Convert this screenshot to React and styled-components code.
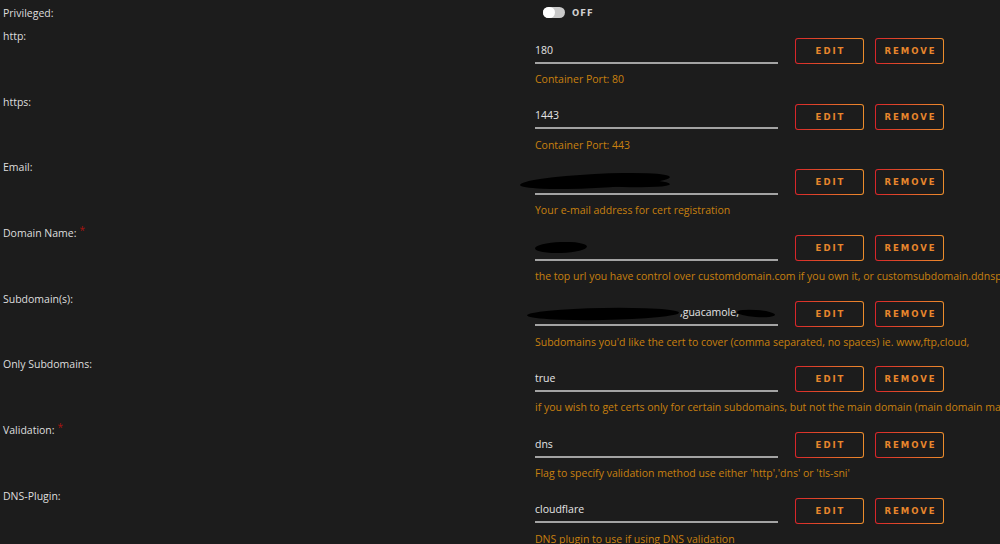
import React from "react";
import styled, { createGlobalStyle } from "styled-components";

const GlobalStyle = createGlobalStyle`
  html, body {
    margin: 0;
    padding: 0;
    background: #1c1c1c;
    overflow: hidden;
  }
  body {
    font-family: "Open Sans", "Noto Sans", sans-serif;
    -webkit-font-smoothing: antialiased;
  }
`;

const Page = styled.div`
  width: 1000px;
  height: 544px;
  overflow: hidden;
`;

const Row = styled.div`
  display: grid;
  grid-template-columns: 532px 1fr;
  padding-left: 3px;
  height: ${(p) => (p.$compact ? "32px" : "65.7px")};
  padding-top: ${(p) => (p.$compact ? "6px" : "0")};
  box-sizing: border-box;
  align-items: start;
`;

const Label = styled.div`
  font-size: 10.5px;
  font-weight: 500;
  line-height: 14px;
  color: #dedede;
  white-space: nowrap;
  margin-top: ${(p) => (p.$compact ? "0" : "-3px")};
`;

const Required = styled.span`
  color: #a8140f;
  font-size: 10px;
  position: relative;
  top: -3px;
  margin-left: 3px;
`;

const Field = styled.div`
  display: flex;
  flex-direction: column;
  padding-top: 6px;
`;

const Controls = styled.div`
  display: flex;
  align-items: center;
  height: 26px;
`;

const Value = styled.div`
  position: relative;
  width: 243px;
  height: 25px;
  box-sizing: border-box;
  border-bottom: 2px solid #a3a3a3;
  font-size: 10.5px;
  font-weight: 500;
  line-height: 23px;
  color: #e4e4e4;
  white-space: nowrap;
  margin-right: 17px;
`;

const Redact = styled.span`
  position: absolute;
  background: #000;
  border-radius: 50%;
  transform: rotate(${(p) => p.$rot || 0}deg);
`;

const Button = styled.button`
  width: 69px;
  height: 26px;
  margin-right: 11px;
  box-sizing: border-box;
  border: 1.5px solid transparent;
  border-radius: 3px;
  background: linear-gradient(#1c1c1c, #1c1c1c) padding-box,
    linear-gradient(90deg, #d8262a, #ec8d2c) border-box;
  color: #e8862c;
  font-family: "DejaVu Sans", "Open Sans", sans-serif;
  font-size: 8.5px;
  font-weight: 700;
  letter-spacing: 2px;
  padding: 0 0 0 2px;
  cursor: pointer;
`;

const Help = styled.div`
  margin-top: 8px;
  font-size: 10.5px;
  line-height: 14px;
  color: #c8800f;
  white-space: nowrap;
`;

const ToggleWrap = styled.div`
  display: flex;
  align-items: center;
  margin-left: 8px;
  margin-top: 1px;
  gap: 7px;
`;

const Track = styled.div`
  width: 22px;
  height: 11px;
  border-radius: 6px;
  background: #c9c9c9;
  position: relative;
`;

const Knob = styled.div`
  position: absolute;
  left: 0;
  top: 0;
  width: 12px;
  height: 11px;
  border-radius: 6px;
  background: #fff;
`;

const ToggleText = styled.span`
  font-family: "DejaVu Sans", sans-serif;
  font-size: 8.5px;
  font-weight: 700;
  letter-spacing: 1px;
  color: #d0d0d0;
`;

const rows = [
  { label: "http:", value: "180", help: "Container Port: 80" },
  { label: "https:", value: "1443", help: "Container Port: 443" },
  {
    label: "Email:",
    value: (
      <>
        <span style={{ marginLeft: 112, color: "#bbb", fontSize: 9 }}>uic</span>
        <Redact style={{ left: -15, top: 4, width: 150, height: 14 }} $rot={-3} />
        <Redact style={{ left: 40, top: 8, width: 95, height: 9 }} $rot={2} />
      </>
    ),
    help: "Your e-mail address for cert registration",
  },
  {
    label: "Domain Name:",
    required: true,
    value: (
      <>
        <Redact style={{ left: 0, top: 6, width: 52, height: 11 }} $rot={-2} />
      </>
    ),
    help:
      "the top url you have control over customdomain.com if you own it, or customsubdomain.ddnsprovider.com if dynamic dns",
  },
  {
    label: "Subdomain(s):",
    value: (
      <>
        <span style={{ marginLeft: 145 }}>,guacamole,</span>
        <Redact style={{ left: -8, top: 7, width: 152, height: 12 }} $rot={-1} />
        <Redact style={{ left: 202, top: 9, width: 38, height: 7 }} $rot={4} />
      </>
    ),
    help:
      "Subdomains you'd like the cert to cover (comma separated, no spaces) ie. www,ftp,cloud,",
  },
  {
    label: "Only Subdomains:",
    value: "true",
    help:
      "if you wish to get certs only for certain subdomains, but not the main domain (main domain may be hosted on another machine and cannot be validated), set this to true",
  },
  {
    label: "Validation:",
    required: true,
    value: "dns",
    help: "Flag to specify validation method use either 'http','dns' or 'tls-sni'",
  },
  {
    label: "DNS-Plugin:",
    value: "cloudflare",
    help: "DNS plugin to use if using DNS validation",
  },
];

export default function App() {
  return (
    <Page>
      <GlobalStyle />
      <Row $compact>
        <Label $compact>Privileged:</Label>
        <ToggleWrap>
          <Track>
            <Knob />
          </Track>
          <ToggleText>OFF</ToggleText>
        </ToggleWrap>
      </Row>
      {rows.map((r) => (
        <Row key={r.label}>
          <Label>
            {r.label}
            {r.required && <Required>*</Required>}
          </Label>
          <Field>
            <Controls>
              <Value>{r.value}</Value>
              <Button>EDIT</Button>
              <Button>REMOVE</Button>
            </Controls>
            <Help>{r.help}</Help>
          </Field>
        </Row>
      ))}
    </Page>
  );
}
